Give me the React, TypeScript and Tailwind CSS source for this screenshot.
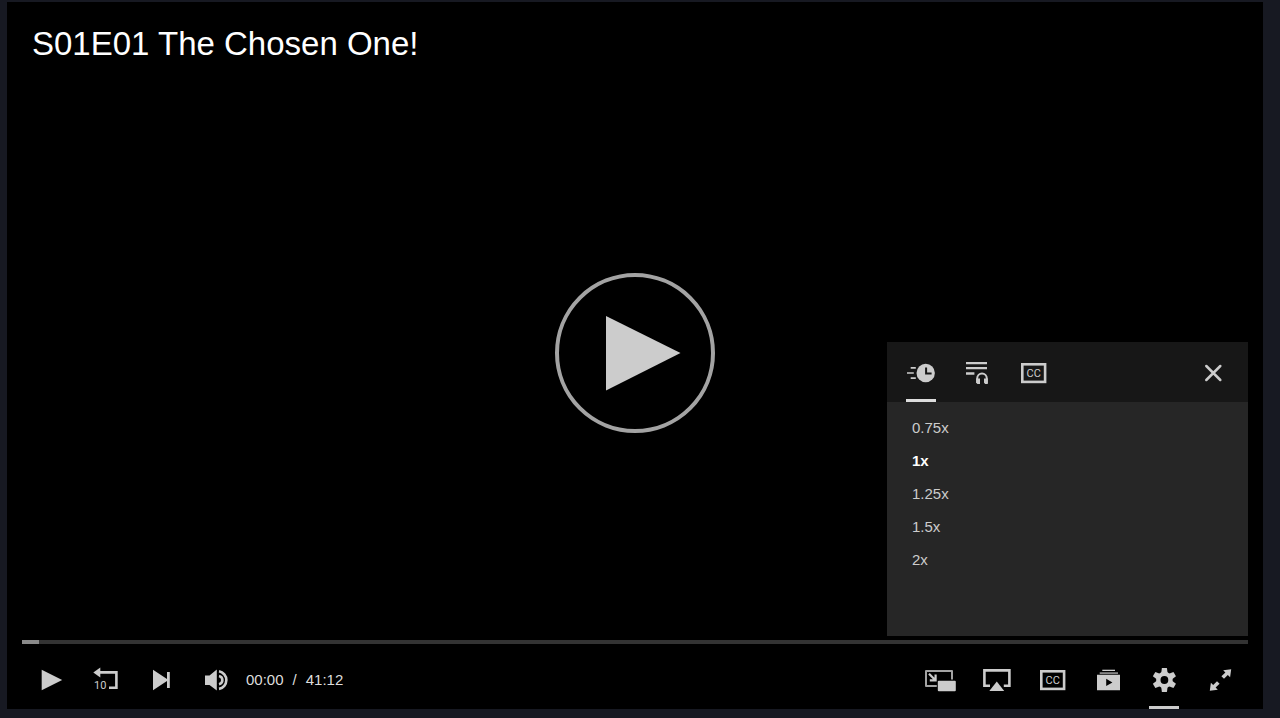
import React, { useState } from 'react';

/* ==========================================================================
   Video Player
   Full-window player with transport controls and a playback settings panel
   ========================================================================== */

const speeds = ['0.75x', '1x', '1.25x', '1.5x', '2x'];

const DURATION = 2472;
const BUFFERED = 35;

function formatTime(seconds: number) {
  const m = Math.floor(seconds / 60);
  const s = seconds % 60;
  return `${String(m).padStart(2, '0')}:${String(s).padStart(2, '0')}`;
}

// ==========================================================================
// Icons (all drawn on a 40x40 grid)
// ==========================================================================

function Icon({ children }: { children: React.ReactNode }) {
  return (
    <svg className="h-10 w-10 shrink-0" viewBox="0 0 40 40" fill="none" aria-hidden="true">
      {children}
    </svg>
  );
}

const PlayIcon = () => (
  <Icon>
    <path fill="currentColor" d="M11.7 9.8L32.2 20L11.7 30.2Z" />
  </Icon>
);

const RewindIcon = () => (
  <Icon>
    <path fill="currentColor" d="M7.3 12.5L14.3 7.6V17.4Z" />
    <path stroke="currentColor" strokeWidth="2.6" d="M13.5 12.4H30.4V27.7H23" />
    <text x="8" y="28.6" fill="currentColor" className="font-['Roboto',sans-serif] text-[11px]">10</text>
  </Icon>
);

const NextIcon = () => (
  <Icon>
    <path fill="currentColor" d="M11 9.8L25 19V12H27.8V28H25V21L11 30.2Z" />
  </Icon>
);

const VolumeIcon = () => (
  <Icon>
    <path fill="currentColor" d="M7 15.6H11.5L18.8 9.6V30.4L11.5 25H7Z" />
    <path stroke="currentColor" strokeWidth="2.6" d="M21 15.9A4.3 4.3 0 0 1 21 24.3" />
    <path stroke="currentColor" strokeWidth="2.6" d="M21 11.2A9 9 0 0 1 21 28.9" />
  </Icon>
);

const PipIcon = () => (
  <Icon>
    <path stroke="currentColor" strokeOpacity="0.8" strokeWidth="2" strokeLinejoin="round" d="M16.8 26H6V11H32V19.6" />
    <path stroke="currentColor" strokeWidth="2.2" d="M9 13.8L15.2 20M15.6 14.4V20.4H9.8" />
    <rect x="17.8" y="20.8" width="18" height="10.4" rx="1" fill="currentColor" />
  </Icon>
);

const AirplayIcon = () => (
  <Icon>
    <path stroke="currentColor" strokeWidth="2.6" d="M14 25.8H8.4V10.4H33.4V25.8H27.8" />
    <path fill="currentColor" d="M20.8 21.6L28.2 31H13.3Z" />
  </Icon>
);

const CaptionsIcon = () => (
  <Icon>
    <rect x="9.3" y="11.3" width="22.8" height="17.6" stroke="currentColor" strokeWidth="2.6" />
    <text x="20.7" y="24" textAnchor="middle" fill="currentColor" className="font-['Liberation_Sans_Narrow','Roboto',sans-serif] text-[11px]">CC</text>
  </Icon>
);

const EpisodesIcon = () => (
  <Icon>
    <path fill="currentColor" d="M14.3 9.7H27V11H14.3Z" />
    <path fill="currentColor" fillOpacity="0.65" d="M11.7 12.2H30V14H11.7Z" />
    <path fill="currentColor" fillRule="evenodd" d="M9 14.8H32V30.2H9ZM18.2 18.8V26L24.4 22.4Z" />
  </Icon>
);

const GearIcon = () => (
  <Icon>
    <circle cx="20.4" cy="20" r="6.1" stroke="currentColor" strokeWidth="4.4" />
    {[0, 60, 120, 180, 240, 300].map((angle) => (
      <path key={angle} fill="currentColor" transform={`rotate(${angle} 20.4 20)`} d="M17.9 8.1H22.9L23.6 13H17.2Z" />
    ))}
  </Icon>
);

const ExpandIcon = () => (
  <Icon>
    <path fill="currentColor" d="M31.2 9.2L30.1 17.2L27.8 14.9L24 18.8L21.4 16.2L25.4 12.4L23.2 10.2Z" />
    <path fill="currentColor" d="M9.8 30.8L10.9 22.8L13.2 25.1L17 21.2L19.6 23.8L15.6 27.6L17.8 29.8Z" />
  </Icon>
);

const SpeedIcon = () => (
  <Icon>
    <circle cx="24.7" cy="20" r="9.2" fill="currentColor" />
    <path stroke="#171717" strokeWidth="2" d="M25.1 14.4V20.5H30.6" />
    <path stroke="currentColor" strokeWidth="1.7" d="M9.7 14.8H14.8M6 20H12.8M9.7 25.2H14.8" />
  </Icon>
);

const AudioIcon = () => (
  <Icon>
    <path fill="currentColor" d="M9 9H30V11.3H9ZM9 14H30V16.3H9ZM9 19.3H17.4V21.7H9Z" />
    <path stroke="currentColor" strokeWidth="2" d="M20.2 30V25.4A4.8 4.8 0 0 1 29.8 25.4V30" />
    <path fill="currentColor" d="M19.2 25.4H23V31H20.4L19.2 29.8ZM27 25.4H30.8V31H28.2L27 29.8Z" />
  </Icon>
);

const CloseIcon = () => (
  <Icon>
    <path stroke="currentColor" strokeWidth="2.5" strokeLinecap="round" d="M13.3 13L27.3 27M27.3 13L13.3 27" />
  </Icon>
);

// ==========================================================================
// Buttons
// ==========================================================================

type IconButtonProps = {
  label: string;
  active?: boolean;
  onClick?: () => void;
  children: React.ReactNode;
};

function ControlButton({ label, active, onClick, children }: IconButtonProps) {
  return (
    <button
      type="button"
      aria-label={label}
      onClick={onClick}
      className="relative flex h-[58px] w-14 shrink-0 cursor-pointer items-center justify-center text-[#cccccc] hover:text-white"
    >
      {children}
      {active && <span className="absolute inset-x-[13px] bottom-0 h-[3px] bg-[#cccccc]" />}
    </button>
  );
}

function TabButton({ label, active, onClick, children }: IconButtonProps) {
  return (
    <button
      type="button"
      aria-label={label}
      onClick={onClick}
      className="relative flex h-full w-14 cursor-pointer items-center justify-center pt-0.5 text-[#cccccc] hover:text-white"
    >
      {children}
      {active && <span className="absolute inset-x-[13px] bottom-0 h-[3px] bg-[#dddddd]" />}
    </button>
  );
}

// ==========================================================================
// Settings Panel
// ==========================================================================

function SettingsPanel({ onClose }: { onClose: () => void }) {
  const [tab, setTab] = useState<'speed' | 'audio' | 'captions'>('speed');
  const [speed, setSpeed] = useState('1x');

  return (
    <section aria-label="Settings" className="relative w-[361px] bg-[#262626]">
      <div className="flex h-[60px] items-center bg-[#171717] pr-[7px] pl-1.5">
        <TabButton label="Playback speed" active={tab === 'speed'} onClick={() => setTab('speed')}>
          <SpeedIcon />
        </TabButton>
        <TabButton label="Audio" active={tab === 'audio'} onClick={() => setTab('audio')}>
          <AudioIcon />
        </TabButton>
        <TabButton label="Captions" active={tab === 'captions'} onClick={() => setTab('captions')}>
          <CaptionsIcon />
        </TabButton>
        <div className="flex-1" />
        <TabButton label="Close" onClick={onClose}>
          <CloseIcon />
        </TabButton>
      </div>

      <ul className="pt-[9px] pb-[60px]">
        {speeds.map((item) => (
          <li key={item}>
            <button
              type="button"
              aria-pressed={item === speed}
              onClick={() => setSpeed(item)}
              className={`block h-[33px] w-full cursor-pointer pl-[25px] text-left text-[15px] leading-[33px] ${
                item === speed ? 'font-bold text-white' : 'text-[#cccccc]'
              }`}
            >
              {item}
            </button>
          </li>
        ))}
      </ul>
    </section>
  );
}

// ==========================================================================
// Player
// ==========================================================================

export default function App() {
  const [time, setTime] = useState(0);
  const [settingsOpen, setSettingsOpen] = useState(true);

  const filled = (Math.max(time, BUFFERED) / DURATION) * 100;

  return (
    <div className="flex min-h-screen bg-[#171922] pt-0.5 pr-[17px] pb-[9px] pl-[7px] font-['Liberation_Sans',Arial,sans-serif]">
      <main className="relative flex flex-1 flex-col bg-black">
        <h1 className="px-[25px] pt-[22px] text-[33px] leading-10 text-white">S01E01 The Chosen One!</h1>

        {/* Big play button over the video */}
        <div className="absolute inset-0 flex items-center justify-center pb-[5px]">
          <button type="button" aria-label="Play video" className="cursor-pointer text-[#cccccc]">
            <svg className="h-40 w-40" viewBox="0 0 160 160" fill="none" aria-hidden="true">
              <circle cx="80" cy="80" r="78" stroke="#a3a3a3" strokeWidth="4" />
              <path fill="currentColor" d="M51 43L125.5 80L51 117.5Z" />
            </svg>
          </button>
        </div>

        <div className="flex flex-1 items-end justify-end px-[15px] pb-1">
          {settingsOpen && <SettingsPanel onClose={() => setSettingsOpen(false)} />}
        </div>

        {/* Seek bar and controls */}
        <div className="relative px-[15px]">
          <input
            type="range"
            aria-label="Seek"
            min={0}
            max={DURATION}
            value={time}
            onChange={(e) => setTime(Number(e.target.value))}
            className="block h-1 w-full cursor-pointer appearance-none [&::-webkit-slider-thumb]:h-1 [&::-webkit-slider-thumb]:w-0 [&::-webkit-slider-thumb]:appearance-none"
            style={{ background: `linear-gradient(to right, #8a8a8a ${filled}%, #333333 ${filled}%)` }}
          />
          <div className="flex items-center justify-between pt-[7px]">
            <div className="flex items-center">
              <ControlButton label="Play">
                <PlayIcon />
              </ControlButton>
              <ControlButton label="Back 10 seconds" onClick={() => setTime(Math.max(0, time - 10))}>
                <RewindIcon />
              </ControlButton>
              <ControlButton label="Next episode">
                <NextIcon />
              </ControlButton>
              <ControlButton label="Volume">
                <VolumeIcon />
              </ControlButton>
              <div className="flex gap-[9px] text-[15px] leading-5 text-[#dddddd]">
                <span>{formatTime(time)}</span>
                <span>/</span>
                <span>{formatTime(DURATION)}</span>
              </div>
            </div>
            <div className="flex items-center">
              <ControlButton label="Picture in picture">
                <PipIcon />
              </ControlButton>
              <ControlButton label="AirPlay">
                <AirplayIcon />
              </ControlButton>
              <ControlButton label="Captions">
                <CaptionsIcon />
              </ControlButton>
              <ControlButton label="Episodes">
                <EpisodesIcon />
              </ControlButton>
              <ControlButton label="Settings" active={settingsOpen} onClick={() => setSettingsOpen(!settingsOpen)}>
                <GearIcon />
              </ControlButton>
              <ControlButton label="Full screen">
                <ExpandIcon />
              </ControlButton>
            </div>
          </div>
        </div>
      </main>
    </div>
  );
}
